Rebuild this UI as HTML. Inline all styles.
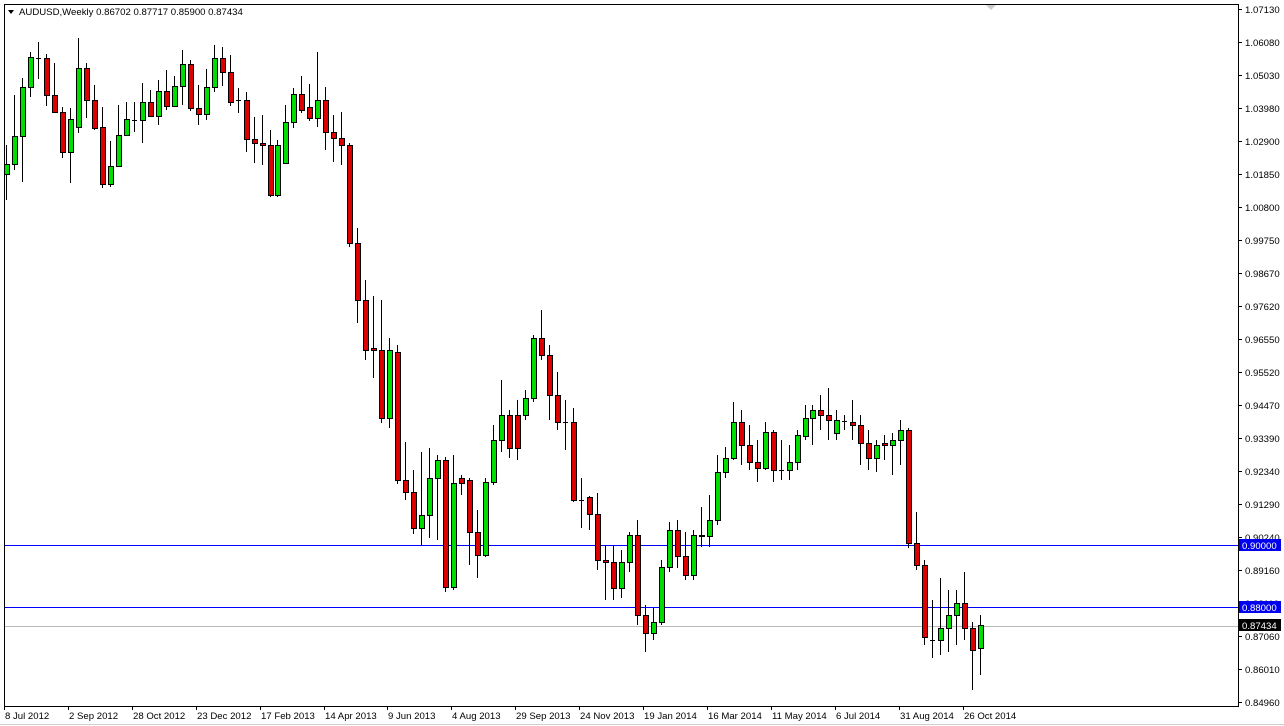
<!DOCTYPE html>
<html><head><meta charset="utf-8"><style>
html,body{margin:0;padding:0;background:#fff;width:1284px;height:726px;overflow:hidden}
svg{display:block}
text{font-family:"Liberation Sans",sans-serif;font-size:9.6px;fill:#000}
</style></head><body>
<svg id="s" width="1284" height="726" xmlns="http://www.w3.org/2000/svg">
<rect x="0" y="0" width="1284" height="726" fill="#fff"/>
<line x1="0" y1="724.5" x2="1284" y2="724.5" stroke="#ccc"/>
<rect x="4.5" y="4.5" width="1234" height="702" fill="none" stroke="#000"/>
<polygon points="986,5 996,5 991,10" fill="#ccc"/>
<line x1="5" y1="545.5" x2="1238" y2="545.5" stroke="#0000ff"/>
<line x1="5" y1="607.5" x2="1238" y2="607.5" stroke="#0000ff"/>
<line x1="5" y1="626.5" x2="1238" y2="626.5" stroke="#bbb"/>
<polygon points="8,10 14,10 11,14" fill="#000"/>
<text x="19" y="15">AUDUSD,Weekly  0.86702 0.87717 0.85900 0.87434</text>
<g id="c"></g>
<g id="ax"></g>
<rect x="1239" y="539" width="42" height="12" fill="#0000ee"/>
<text x="1242" y="549" style="fill:#fff">0.90000</text>
<rect x="1239" y="601" width="42" height="12" fill="#0000ee"/>
<text x="1242" y="611" style="fill:#fff">0.88000</text>
<rect x="1239" y="619" width="42" height="12" fill="#000"/>
<text x="1242" y="629" style="fill:#fff">0.87434</text>
</svg>
<script>
var d=[[174,164,145,200],[164,136,95,170],[136,87,78,182],[87,57,52,97],[58,58,42,79],[58,95,54,106],[95,112,63,113],[112,152,107,158],[152,119,108,183],[127,68,38,133],[68,100,63,118],[100,128,85,130],[127,184,107,188],[184,166,141,187],[166,135,105,160],[135,119,102,130],[120,120,102,132],[120,102,83,143],[102,116,90,117],[116,91,80,125],[91,106,70,110],[106,86,76,107],[86,64,50,105],[64,108,60,111],[108,114,85,125],[114,87,69,120],[87,58,45,92],[58,72,47,86],[72,102,55,106],[100,100,88,113],[100,139,92,152],[139,143,117,163],[143,145,115,165],[145,195,130,197],[195,145,140,197],[163,122,105,163],[122,94,88,128],[94,110,76,113],[107,118,84,121],[118,100,52,127],[100,132,87,150],[132,138,115,162],[138,145,112,165],[145,243,143,247],[243,300,228,323],[300,350,280,360],[348,350,296,378],[350,418,300,423],[418,350,338,428],[352,480,345,484],[480,492,442,500],[492,528,470,534],[528,515,452,545],[515,478,448,538],[478,460,455,540],[460,587,457,592],[587,483,455,590],[478,483,475,495],[480,532,478,565],[532,555,510,578],[555,482,478,557],[482,440,425,485],[440,415,380,452],[415,448,410,458],[415,448,400,460],[415,398,390,420],[398,338,335,402],[338,355,310,360],[355,395,345,420],[395,422,372,430],[422,422,400,450],[422,500,408,502],[500,500,478,528],[497,514,496,530],[514,560,493,570],[560,562,545,600],[562,588,545,600],[588,562,550,598],[562,535,532,572],[535,615,520,625],[615,633,605,652],[633,622,608,640],[622,567,560,625],[567,530,522,572],[530,556,520,568],[556,575,532,580],[575,535,530,580],[535,536,507,547],[536,520,495,547],[520,472,455,525],[472,458,447,478],[458,422,402,460],[422,445,410,465],[445,462,425,470],[462,468,440,482],[468,432,422,470],[432,470,430,482],[470,470,440,480],[470,462,445,480],[462,435,430,470],[436,418,405,440],[418,410,405,445],[410,415,395,430],[415,420,388,440],[433,420,410,440],[421,421,415,430],[422,425,400,440],[425,443,415,465],[443,458,430,470],[458,445,440,472],[443,445,435,460],[445,440,433,475],[440,430,420,465],[430,543,428,548],[543,565,512,570],[565,637,560,645],[640,640,600,658],[640,628,578,655],[628,615,590,652],[615,603,590,645],[603,628,572,640],[628,650,622,690],[648,625,615,675]];
var h='';
d.forEach(function(c,i){
 var x=Math.round(6+i*7.985),o=c[0],cl=c[1],hi=c[2],lo=c[3];
 h+='<line x1="'+(x+.5)+'" y1="'+hi+'" x2="'+(x+.5)+'" y2="'+lo+'" stroke="#000"/>';
 var t=Math.min(o,cl),b=Math.max(o,cl);
 if(b-t<1){h+='<line x1="'+(x-2)+'" y1="'+(t+.5)+'" x2="'+(x+3)+'" y2="'+(t+.5)+'" stroke="#000"/>';}
 else{var col=cl<o?'#00dd00':'#dd0000';
 h+='<rect x="'+(x-2)+'.5" y="'+(t+.5)+'" width="5" height="'+(b-t)+'" fill="'+col+'" stroke="#000"/>';}
});
document.getElementById('c').innerHTML=h;
var p=['1.07130','1.06080','1.05030','1.03980','1.02900','1.01850','1.00800','0.99750','0.98670','0.97620','0.96550','0.95520','0.94470','0.93390','0.92340','0.91290','0.90240','0.89160','0.88110','0.87060','0.86010','0.84960'];
var a='';
p.forEach(function(v,i){var y=9+i*33;a+='<line x1="1238" y1="'+(y+.5)+'" x2="1242" y2="'+(y+.5)+'" stroke="#000"/><text x="1245" y="'+(y+4)+'">'+v+'</text>';});
var ds=['8 Jul 2012','2 Sep 2012','28 Oct 2012','23 Dec 2012','17 Feb 2013','14 Apr 2013','9 Jun 2013','4 Aug 2013','29 Sep 2013','24 Nov 2013','19 Jan 2014','16 Mar 2014','11 May 2014','6 Jul 2014','31 Aug 2014','26 Oct 2014'];
ds.forEach(function(v,i){var x=Math.round(4+i*63.9);a+='<line x1="'+(x+.5)+'" y1="706" x2="'+(x+.5)+'" y2="710" stroke="#000"/><text x="'+(x+1)+'" y="719">'+v+'</text>';});
document.getElementById('ax').innerHTML=a;
</script>
</body></html>
